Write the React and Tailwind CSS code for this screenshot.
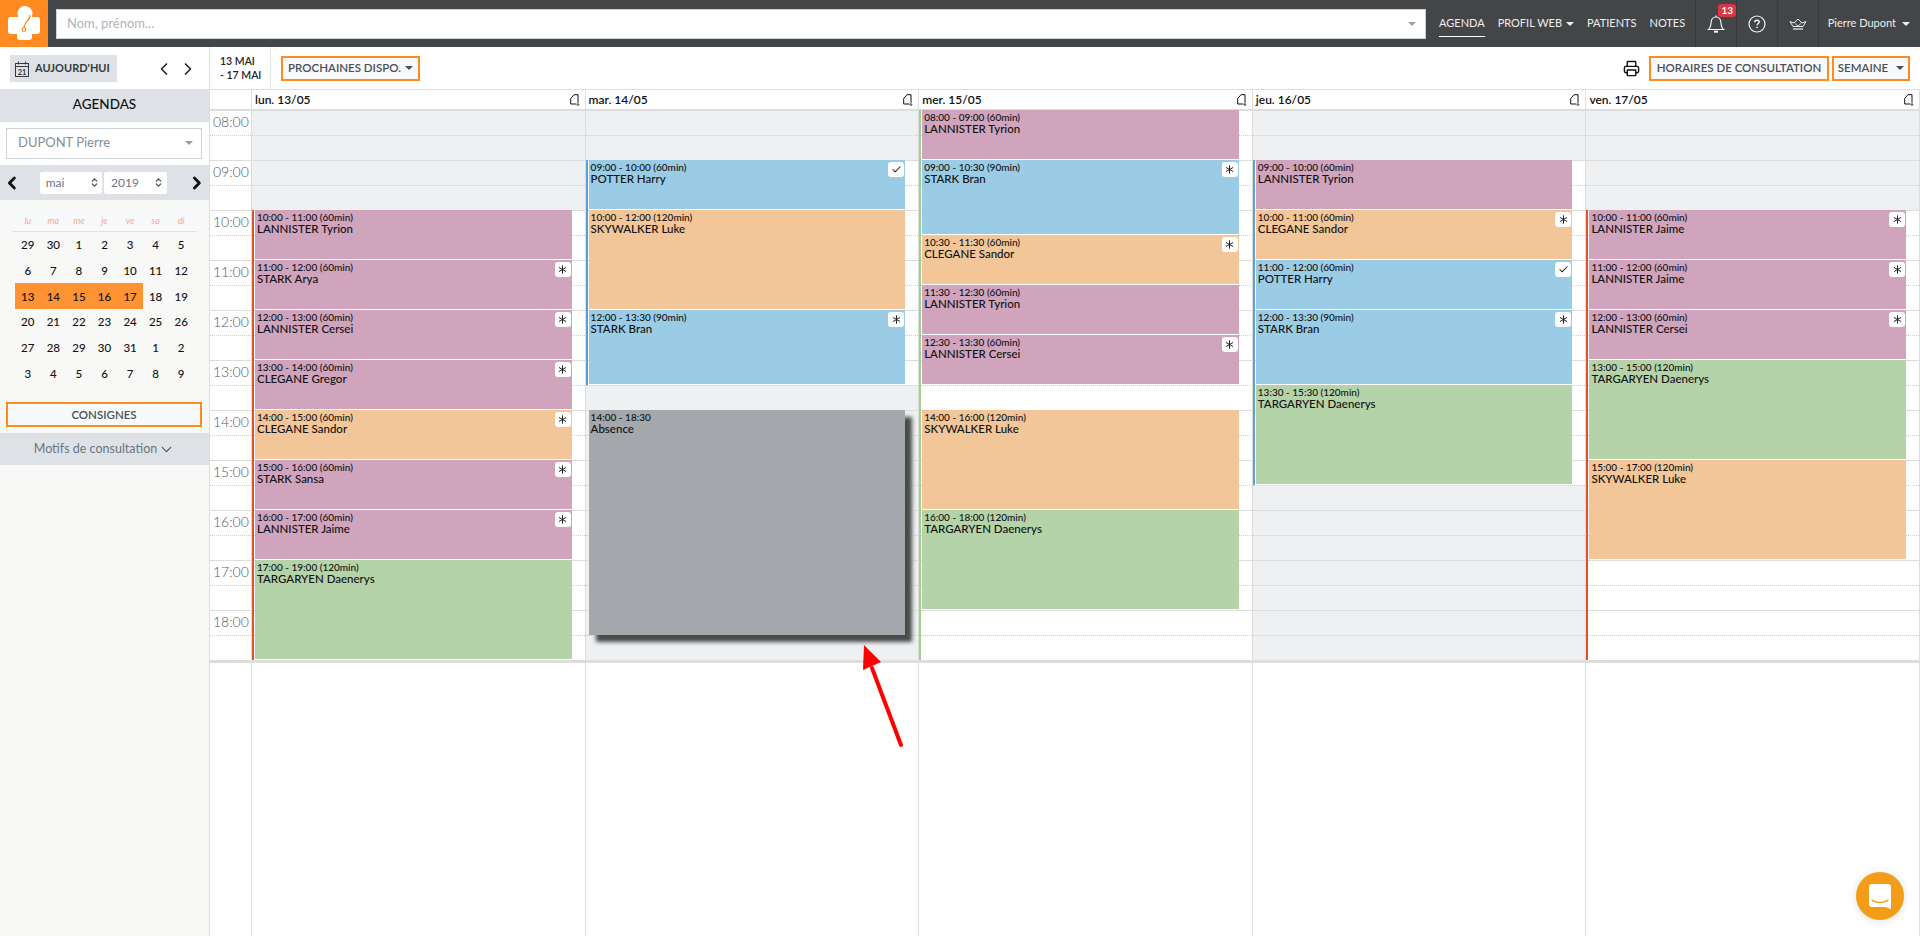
import React from 'react';
import { Asterisk, Check, ChevronDown, ChevronLeft, ChevronRight, Printer, ChevronsUpDown } from 'lucide-react';

const HOURS = ['08:00', '09:00', '10:00', '11:00', '12:00', '13:00', '14:00', '15:00', '16:00', '17:00', '18:00'];

const COLORS = {
  purple: 'bg-[#d0a4bd]',
  orange: 'bg-[#f2c698]',
  blue: 'bg-[#9acce5]',
  green: 'bg-[#b5d3a8]',
};

// hours are decimals, 8 = first slot; every half hour is one 25px row
const rowOf = (h) => (h - 8) * 2 + 1;

const DAYS = [
  {
    label: 'lun. 13/05',
    grey: [[8, 10]],
    bar: { from: 10, to: 19, color: 'bg-[#e0512e]' },
    events: [
      [10, 11, '10:00 - 11:00 (60min)', 'LANNISTER Tyrion', 'purple'],
      [11, 12, '11:00 - 12:00 (60min)', 'STARK Arya', 'purple', 'star'],
      [12, 13, '12:00 - 13:00 (60min)', 'LANNISTER Cersei', 'purple', 'star'],
      [13, 14, '13:00 - 14:00 (60min)', 'CLEGANE Gregor', 'purple', 'star'],
      [14, 15, '14:00 - 15:00 (60min)', 'CLEGANE Sandor', 'orange', 'star'],
      [15, 16, '15:00 - 16:00 (60min)', 'STARK Sansa', 'purple', 'star'],
      [16, 17, '16:00 - 17:00 (60min)', 'LANNISTER Jaime', 'purple', 'star'],
      [17, 19, '17:00 - 19:00 (120min)', 'TARGARYEN Daenerys', 'green'],
    ],
  },
  {
    label: 'mar. 14/05',
    grey: [[8, 9], [13.5, 19]],
    bar: { from: 9, to: 13.5, color: 'bg-[#5b9fd6]' },
    absence: true,
    events: [
      [9, 10, '09:00 - 10:00 (60min)', 'POTTER Harry', 'blue', 'check'],
      [10, 12, '10:00 - 12:00 (120min)', 'SKYWALKER Luke', 'orange'],
      [12, 13.5, '12:00 - 13:30 (90min)', 'STARK Bran', 'blue', 'star'],
    ],
  },
  {
    label: 'mer. 15/05',
    grey: [],
    bar: { from: 8, to: 19, color: 'bg-[#9fd08f]' },
    events: [
      [8, 9, '08:00 - 09:00 (60min)', 'LANNISTER Tyrion', 'purple'],
      [9, 10.5, '09:00 - 10:30 (90min)', 'STARK Bran', 'blue', 'star'],
      [10.5, 11.5, '10:30 - 11:30 (60min)', 'CLEGANE Sandor', 'orange', 'star'],
      [11.5, 12.5, '11:30 - 12:30 (60min)', 'LANNISTER Tyrion', 'purple'],
      [12.5, 13.5, '12:30 - 13:30 (60min)', 'LANNISTER Cersei', 'purple', 'star'],
      [14, 16, '14:00 - 16:00 (120min)', 'SKYWALKER Luke', 'orange'],
      [16, 18, '16:00 - 18:00 (120min)', 'TARGARYEN Daenerys', 'green'],
    ],
  },
  {
    label: 'jeu. 16/05',
    grey: [[8, 9], [15.5, 19]],
    bar: { from: 9, to: 15.5, color: 'bg-[#5b9fd6]' },
    events: [
      [9, 10, '09:00 - 10:00 (60min)', 'LANNISTER Tyrion', 'purple'],
      [10, 11, '10:00 - 11:00 (60min)', 'CLEGANE Sandor', 'orange', 'star'],
      [11, 12, '11:00 - 12:00 (60min)', 'POTTER Harry', 'blue', 'check'],
      [12, 13.5, '12:00 - 13:30 (90min)', 'STARK Bran', 'blue', 'star'],
      [13.5, 15.5, '13:30 - 15:30 (120min)', 'TARGARYEN Daenerys', 'green'],
    ],
  },
  {
    label: 'ven. 17/05',
    grey: [[8, 10]],
    bar: { from: 10, to: 19, color: 'bg-[#e0512e]' },
    events: [
      [10, 11, '10:00 - 11:00 (60min)', 'LANNISTER Jaime', 'purple', 'star'],
      [11, 12, '11:00 - 12:00 (60min)', 'LANNISTER Jaime', 'purple', 'star'],
      [12, 13, '12:00 - 13:00 (60min)', 'LANNISTER Cersei', 'purple', 'star'],
      [13, 15, '13:00 - 15:00 (120min)', 'TARGARYEN Daenerys', 'green'],
      [15, 17, '15:00 - 17:00 (120min)', 'SKYWALKER Luke', 'orange'],
    ],
  },
];

const CAL_HEAD = ['lu', 'ma', 'me', 'je', 've', 'sa', 'di'];
const CAL_WEEKS = [
  [29, 30, 1, 2, 3, 4, 5],
  [6, 7, 8, 9, 10, 11, 12],
  [13, 14, 15, 16, 17, 18, 19],
  [20, 21, 22, 23, 24, 25, 26],
  [27, 28, 29, 30, 31, 1, 2],
  [3, 4, 5, 6, 7, 8, 9],
];

const Caret = ({ className = '' }) => (
  <span className={`inline-block h-0 w-0 border-x-[4px] border-t-[4px] border-x-transparent border-t-current ${className}`} />
);

const Logo = () => (
  <svg viewBox="0 0 48 47" className="h-[47px] w-[48px]">
    <path d="M16 17 H11 a3 3 0 0 0-3 3 V31 a3 3 0 0 0 3 3 H17 V37 a3 3 0 0 0 3 3 H29 a3 3 0 0 0 3-3 V34 H37 a3 3 0 0 0 3-3 V20 a3 3 0 0 0-3-3 H32 Z" fill="#fff" />
    <circle cx="25" cy="13.5" r="7.5" fill="#fff" />
    <rect x="18" y="13" width="14" height="8" fill="#fff" />
    <path d="M30 15 C31 20 24 21 24 28" fill="none" stroke="#ff8a1f" strokeWidth="1.2" />
    <circle cx="24" cy="29.5" r="1.8" fill="#fff" stroke="#ff8a1f" strokeWidth="1.2" />
  </svg>
);

const BellIcon = () => (
  <svg viewBox="0 0 20 20" className="h-[20px] w-[20px]" fill="none" stroke="#f1f3f5" strokeWidth="1.2">
    <path d="M2.5 15.5 C4.5 14 4.8 11.5 5 9 C5.2 5.5 7 3 10 3 C13 3 14.8 5.5 15 9 C15.2 11.5 15.5 14 17.5 15.5 Z" />
    <path d="M8 17.7 H12" strokeWidth="2" />
    <path d="M10 1.5 V3" />
  </svg>
);

const HelpIcon = () => (
  <svg viewBox="0 0 18 18" className="h-[18px] w-[18px]" fill="none" stroke="#f1f3f5">
    <circle cx="9" cy="9" r="8" strokeWidth="1.2" />
    <path d="M6.8 7.2 C6.8 5.9 7.8 5.2 9 5.2 C10.3 5.2 11.2 6 11.2 7 C11.2 8.4 9.1 8.6 9.1 10.2" strokeWidth="1.5" />
    <path d="M9.1 11.7 V13" strokeWidth="1.6" />
  </svg>
);

const CrownIcon = () => (
  <svg viewBox="0 0 18 12" className="h-[12px] w-[18px]" fill="none" stroke="#f1f3f5" strokeWidth="1">
    <path d="M4 8.5 L1 3.5 L5 5 L9 1 L13 5 L17 3.5 L14 8.5 Z" />
    <path d="M4 11 H14" strokeWidth="1.2" />
    <path d="M6 5.5 L9 8 L12 5.5" strokeWidth="0.8" />
  </svg>
);

const NoteIcon = () => (
  <svg viewBox="0 0 10 12" className="h-[12px] w-[10px]" fill="none" stroke="#111" strokeWidth="1">
    <path d="M0.7 10 V4.5 L4 0.7 H8 V8" />
    <path d="M0.7 10 H6.5" />
    <path d="M8 8 V11.5 M6.8 10.3 L8 11.5 L9.2 10.3" strokeWidth="0.8" />
  </svg>
);

const TodayIcon = () => (
  <svg viewBox="0 0 14 16" className="h-[16px] w-[14px]" fill="none" stroke="#343a40" strokeWidth="1">
    <rect x="0.5" y="2.5" width="13" height="13" />
    <path d="M0.5 5.5 H13.5 M3.5 0.5 V3.5 M10.5 0.5 V3.5" />
    <text x="7" y="13.5" fontSize="7.5" fontWeight="700" textAnchor="middle" fill="#343a40" stroke="none">21</text>
  </svg>
);

const ChatIcon = () => (
  <svg viewBox="0 0 22 25" className="h-[25px] w-[22px]">
    <path d="M3 0 H19 a3 3 0 0 1 3 3 V25 L16 23 H3 a3 3 0 0 1-3-3 V3 a3 3 0 0 1 3-3 Z" fill="#fff" />
    <path d="M3 16 C7 19.5 15 19.5 19 16" fill="none" stroke="#f39c17" strokeWidth="1.3" strokeLinecap="round" />
  </svg>
);

const OutlineBtn = ({ className = '', children }) => (
  <button className={`flex h-[25px] items-center justify-center whitespace-nowrap border-2 border-[#ff8a1f] bg-[#f8f9fa] text-[11.5px] font-semibold text-[#495057] ${className}`}>
    {children}
  </button>
);

function TopBar() {
  return (
    <header className="flex h-[47px] shrink-0 items-center bg-[#444547] text-[#eceef0]">
      <div className="flex h-[47px] w-[48px] shrink-0 bg-[#ff8a1f]">
        <Logo />
      </div>
      <div className="ml-2 flex h-[30px] w-[1370px] shrink-0 items-center justify-between border border-[#ced4da] bg-white pl-[10px] pr-[9px] text-[13px] text-[#adb5bd]">
        <span>Nom, prénom...</span>
        <Caret className="text-[#a0a0a0]" />
      </div>
      <nav className="ml-[13px] flex h-full w-[243px] shrink-0 items-center gap-[13px] whitespace-nowrap text-[11px]">
        <span className="border-b border-white pb-[4px] pt-[5px]">AGENDA</span>
        <span className="flex items-center gap-1">PROFIL WEB <Caret /></span>
        <span>PATIENTS</span>
        <span>NOTES</span>
      </nav>
      <div className="ml-[13px] flex h-full items-stretch">
        <div className="flex w-[41px] items-center justify-center border-l border-[#38393b]">
          <div className="relative flex">
            <BellIcon />
            <span className="absolute -right-[10px] -top-[10px] rounded-[3px] bg-[#dc3545] px-[3px] text-[10px] font-bold leading-[13px] text-white">13</span>
          </div>
        </div>
        <div className="flex w-[41px] items-center justify-center border-l border-[#38393b]"><HelpIcon /></div>
        <div className="flex w-[41px] items-center justify-center border-l border-[#38393b]"><CrownIcon /></div>
        <div className="flex w-[102px] items-center justify-end gap-[6px] whitespace-nowrap border-l border-[#38393b] pr-[10px] text-[11px]">
          Pierre Dupont <Caret />
        </div>
      </div>
    </header>
  );
}

function Sidebar() {
  return (
    <aside className="flex w-[210px] shrink-0 flex-col border-r border-[#dddddd] bg-[#f8f8f6]">
      <div className="flex h-[42px] items-center bg-white pl-[10px] pt-[1px]">
        <button className="flex h-[27px] w-[107px] items-center gap-[6px] whitespace-nowrap bg-[#dee2e6] pl-[5px] text-[11px] font-bold text-[#343a40]">
          <TodayIcon />
          AUJOURD'HUI
        </button>
        <ChevronLeft className="ml-[37px] h-[20px] w-[20px] text-[#222]" strokeWidth={2} />
        <ChevronRight className="ml-[4px] h-[20px] w-[20px] text-[#222]" strokeWidth={2} />
      </div>

      <div className="flex h-[33px] items-center justify-center bg-[#dee2e6] pb-[2px] text-[13.5px] font-medium text-[#111]">AGENDAS</div>

      <div className="flex h-[43px] items-center bg-white pl-[6px] pr-[7px]">
        <div className="flex h-[31px] w-full items-center justify-between border border-[#ced4da] bg-white pb-[2px] pl-[11px] pr-[8px] text-[13px] text-[#868e96]">
          <span>DUPONT Pierre</span>
          <Caret className="text-[#999]" />
        </div>
      </div>

      <div className="flex h-[35px] items-center bg-[#dee2e6] px-[2px]">
        <ChevronLeft className="h-[20px] w-[20px] text-[#111]" strokeWidth={3.5} />
        <div className="ml-[18px] flex h-[22px] w-[63px] items-center justify-between rounded-[2px] bg-white pl-[6px] pr-[2px] text-[12px] text-[#6c757d]">
          mai <ChevronsUpDown className="h-[11px] w-[11px] text-[#444]" strokeWidth={2.5} />
        </div>
        <div className="ml-[2px] flex h-[22px] w-[64px] items-center justify-between rounded-[2px] bg-white pl-[7px] pr-[3px] text-[12px] text-[#6c757d]">
          2019 <ChevronsUpDown className="h-[11px] w-[11px] text-[#444]" strokeWidth={2.5} />
        </div>
        <ChevronRight className="ml-[20px] h-[20px] w-[20px] text-[#111]" strokeWidth={3.5} />
      </div>

      <div className="mx-[12px] mt-[10px] w-[185px]">
        <div className="grid h-[22px] grid-cols-7 items-center border-b border-[#dee2e6] bg-[#f8f9fa] px-[3px] text-center text-[9px] italic text-[#f5a9a0]">
          {CAL_HEAD.map((d) => <span key={d}>{d}</span>)}
        </div>
        {CAL_WEEKS.map((week, w) => (
          <div key={w} className="grid h-[25.7px] grid-cols-7 items-stretch px-[3px] text-center text-[11.5px] font-medium text-[#111]">
            {week.map((n, i) => (
              <span
                key={i}
                className={`flex items-center justify-center ${w === 2 && i < 5 ? 'bg-[#ff9233]' : ''}`}
              >
                {n}
              </span>
            ))}
          </div>
        ))}
      </div>

      <div className="ml-[6px] mr-[7px] mt-[16px]">
        <OutlineBtn className="w-full">CONSIGNES</OutlineBtn>
      </div>

      <div className="mt-[6px] flex h-[32px] items-center justify-center gap-px bg-[#dee2e6] text-[12.5px] text-[#6c757d]">
        Motifs de consultation
        <ChevronDown className="h-[17px] w-[17px] text-[#495057]" strokeWidth={1.5} />
      </div>
    </aside>
  );
}

function Toolbar() {
  return (
    <div className="flex h-[43px] shrink-0 items-center border-b border-[#dddddd] bg-white">
      <div className="flex h-full w-[61px] shrink-0 flex-col justify-center border-r border-[#e3e3e3] pl-[10px] text-[10.5px] font-semibold leading-[14px] text-[#222]">
        <span>13 MAI</span>
        <span>- 17 MAI</span>
      </div>
      <OutlineBtn className="ml-[10px] w-[139px] gap-1">PROCHAINES DISPO. <Caret /></OutlineBtn>
      <div className="ml-auto flex items-center pr-[10px]">
        <Printer className="mr-[9px] h-[17px] w-[17px] text-[#111]" strokeWidth={2} />
        <OutlineBtn className="w-[180px]">HORAIRES DE CONSULTATION</OutlineBtn>
        <OutlineBtn className="ml-[3px] w-[78px] gap-2">SEMAINE <Caret /></OutlineBtn>
      </div>
    </div>
  );
}

function EventText({ time, name }) {
  return (
    <div>
      <div className="text-[10px] font-medium leading-[12px]">{time}</div>
      <div className="text-[11.5px] font-medium leading-[12px]">{name}</div>
    </div>
  );
}

function EventBlock({ ev }) {
  const [from, to, time, name, color, mark] = ev;
  return (
    <div
      className={`z-10 col-start-1 ml-[3px] mr-[13px] mb-px flex justify-between pl-[2px] pr-px pt-px text-[#111] ${COLORS[color]}`}
      style={{ gridRow: `${rowOf(from)} / ${rowOf(to)}` }}
    >
      <EventText time={time} name={name} />
      {mark && (
        <span className="mt-px flex h-[15px] w-[16px] items-center justify-center rounded-[3px] bg-white text-[#222]">
          {mark === 'star' ? <Asterisk className="h-[15px] w-[15px]" strokeWidth={1.6} /> : <Check className="h-[11px] w-[11px]" strokeWidth={2.25} />}
        </span>
      )}
    </div>
  );
}

function DayColumn({ day }) {
  const isGrey = (i) => {
    const h = 8 + i / 2;
    return day.grey.some(([a, b]) => h >= a && h < b);
  };
  return (
    <div className="grid grid-cols-1 grid-rows-[repeat(22,25px)] border-r border-[#dddddd]">
      {Array.from({ length: 22 }, (_, i) => (
        <div
          key={i}
          className={`col-start-1 border-t ${i % 2 ? 'border-dotted border-[#cfcfcf]' : 'border-[#dddddd]'} ${isGrey(i) ? 'bg-[#eff0f2]' : 'bg-white'}`}
          style={{ gridRow: i + 1 }}
        />
      ))}
      {/* availability bar on the left edge of the day */}
      <div
        className={`z-10 col-start-1 w-[2px] ${day.bar.color}`}
        style={{ gridRow: `${rowOf(day.bar.from)} / ${rowOf(day.bar.to)}` }}
      />
      {day.events.map((ev, i) => <EventBlock key={i} ev={ev} />)}
      {day.absence && (
        <div
          className="z-10 col-start-1 ml-[3px] mr-[13px] bg-[#a4a7ab] pl-[2px] pt-px text-[#111] shadow-[7px_7px_4px_#4a4a4a]"
          style={{ gridRow: `${rowOf(14)} / ${rowOf(18.5)}` }}
        >
          <EventText time="14:00 - 18:30" name="Absence" />
        </div>
      )}
    </div>
  );
}

function Calendar() {
  return (
    <div className="flex min-h-0 flex-1 flex-col">
      {/* day headers */}
      <div className="grid h-[20px] shrink-0 grid-cols-[42px_repeat(5,1fr)] border-b border-[#dddddd] bg-white">
        <div className="border-r border-[#dddddd]" />
        {DAYS.map((d) => (
          <div key={d.label} className="flex items-center justify-between border-r border-[#dddddd] pl-[3px] pr-[5px] text-[12px] font-semibold text-[#111]">
            <span>{d.label}</span>
            <NoteIcon />
          </div>
        ))}
      </div>

      {/* hours and events */}
      <div className="grid shrink-0 grid-cols-[42px_repeat(5,1fr)] border-b-[3px] border-[#dddddd]">
        <div className="border-r border-[#dddddd] bg-white">
          {HOURS.map((h) => (
            <div key={h} className="h-[50px] border-t border-[#dddddd]">
              <div className="h-[25px] border-b border-dotted border-[#cfcfcf] pl-[3px] pt-[1px] text-[14px] font-light leading-[19px] text-[#4f5b6a]">{h}</div>
            </div>
          ))}
        </div>
        {DAYS.map((d) => <DayColumn key={d.label} day={d} />)}
      </div>

      {/* empty space under the day */}
      <div className="grid flex-1 grid-cols-[42px_repeat(5,1fr)] bg-white">
        {[0, 1, 2, 3, 4, 5].map((i) => <div key={i} className="border-r border-[#dddddd]" />)}
      </div>
    </div>
  );
}

export default function App() {
  return (
    <div className="relative flex h-[936px] w-full flex-col overflow-hidden bg-white font-['Lato','Noto_Sans',sans-serif]">
      <TopBar />
      <div className="flex min-h-0 flex-1">
        <Sidebar />
        <main className="flex min-w-0 flex-1 flex-col">
          <Toolbar />
          <Calendar />
        </main>
      </div>

      {/* red annotation arrow drawn over the screenshot */}
      <svg className="absolute left-[850px] top-[640px] z-20 h-[110px] w-[60px]" viewBox="0 0 60 110">
        <path d="M51 105 L22 28" stroke="#ff0000" strokeWidth="4" strokeLinecap="round" />
        <path d="M14 5 L13 30 L31 22 Z" fill="#ff0000" />
      </svg>

      <div className="absolute bottom-[16px] right-[16px] z-20 flex h-[48px] w-[48px] items-center justify-center rounded-full bg-[#f39c17] shadow-[0_1px_10px_rgba(0,0,0,0.12)]">
        <ChatIcon />
      </div>
    </div>
  );
}
